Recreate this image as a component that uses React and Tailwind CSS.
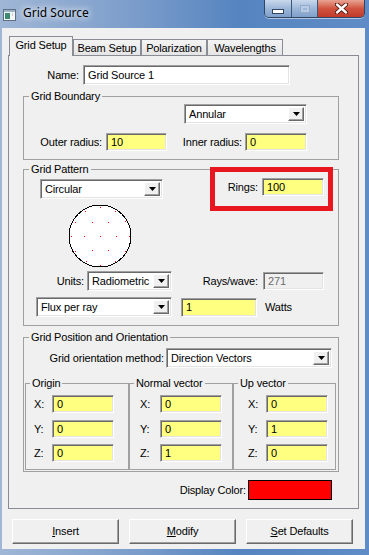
const sunken =
  "border border-t-[#a0a0a0] border-l-[#a0a0a0] border-b-white border-r-white shadow-[inset_1px_1px_0_#696969,inset_-1px_-1px_0_#e3e3e3]"

const raised =
  "border border-t-white border-l-white border-b-[#696969] border-r-[#696969] shadow-[inset_-1px_-1px_0_#a0a0a0] bg-[#f0f0f0]"

const Field = ({ className, value, disabled }) => (
  <div
    className={`${sunken} ${disabled ? "bg-[#f0f0f0] text-[#6d6d6d]" : "bg-[#ffff80]"} flex items-center pl-[4px] shrink-0 ${className}`}
  >
    {value}
  </div>
)

const Select = ({ className, value }) => (
  <div className={`${sunken} bg-white flex items-stretch p-[2px] shrink-0 ${className}`}>
    <div className="flex-1 flex items-center pl-[2px] whitespace-nowrap overflow-hidden">{value}</div>
    <div className={`${raised} w-[16px] flex items-center justify-center`}>
      <svg width="7" height="4" viewBox="0 0 7 4">
        <path d="M0 0h7L3.5 4z" fill="#000" />
      </svg>
    </div>
  </div>
)

const Group = ({ label, className, legendClass = "ml-[5px]", children }) => (
  <fieldset className={`border border-[#a0a0a0] shrink-0 ${className}`}>
    <legend className={`px-[2px] leading-[14px] ${legendClass}`}>{label}</legend>
    {children}
  </fieldset>
)

// ray pattern: center, ring of 6, ring of 12
const dots = (() => {
  const pts = [[32, 32]]
  for (let i = 0; i < 6; i++) {
    const a = (i * Math.PI) / 3
    pts.push([32 + 16 * Math.cos(a), 32 + 16 * Math.sin(a)])
  }
  for (let i = 0; i < 12; i++) {
    const a = (i * Math.PI) / 6
    pts.push([32 + 29 * Math.cos(a), 32 + 29 * Math.sin(a)])
  }
  return pts
})()

const Vec = ({ label, values, pad, labelW, className }) => (
  <Group label={label} legendClass="ml-[4px]" className={`h-[94px] ${className}`}>
    <div className={`flex flex-col ${pad}`}>
      {["X:", "Y:", "Z:"].map((axis, i) => (
        <div
          key={axis}
          className={`flex items-center h-[18px] ${i === 0 ? "mt-[5px]" : i === 1 ? "mt-[7px]" : "mt-[6px]"}`}
        >
          <span className={labelW}>{axis}</span>
          <Field className="w-[62px] h-[18px]" value={values[i]} />
        </div>
      ))}
    </div>
  </Group>
)

const Tab = ({ label, selected, className }) => (
  <div
    className={`${selected
      ? "relative z-10 h-[20px] bg-[#f0f0f0] pb-[2px]"
      : "h-[17px] bg-gradient-to-b from-[#f4f4f4] to-[#e4e4e4]"
      } border border-b-0 border-[#898c95] flex items-center justify-center shrink-0 ${className}`}
  >
    {label}
  </div>
)

const Button = ({ first, rest }) => (
  <div className={`${raised} w-[107px] h-[25px] flex items-center justify-center`}>
    <span>
      <span className="underline">{first}</span>
      {rest}
    </span>
  </div>
)

export default function App() {
  return (
    <div className="relative w-[369px] h-[555px] overflow-hidden bg-[linear-gradient(90deg,#9fb6d6_0%,#7d9ecb_35%,#5584c0_65%,#5f8cc6_100%)] font-['Liberation_Sans',Arial,sans-serif] text-[11px] leading-[13px] tracking-[-0.15px] text-black">
      {/* title bar */}
      <div className="h-[28px] flex items-start">
        <svg className="mt-[9px] ml-[3px]" width="13" height="12" viewBox="0 0 13 12">
          <rect x="0.5" y="0.5" width="12" height="11" fill="#f4f6f8" stroke="#5d6f80" />
          <rect x="1" y="1" width="11" height="2" fill="#9db3c8" />
          <rect x="2" y="4" width="5" height="6" fill="#3d8a74" />
          <rect x="9" y="4" width="1" height="3" fill="#c8c8c8" />
        </svg>
        <div className="ml-[7px] mt-[5px] font-['Noto_Sans',sans-serif] text-[12px] leading-[16px] tracking-normal [text-shadow:0_0_6px_#ffffff,0_0_10px_#ffffff]">
          Grid Source
        </div>
        <div className="ml-auto mr-[4px] flex h-[18px] border border-t-0 border-[#2f4664] rounded-b-[5px] overflow-hidden shadow-[0_1px_0_rgba(255,255,255,0.5)]">
          <div className="w-[27px] bg-gradient-to-b from-[#c9d8ec] via-[#9db7d9] to-[#7f9fca] flex items-center justify-center border-r border-[#3c5677]">
            <div className="mt-[5px] w-[10px] h-[3px] bg-white border border-[#2f4664] box-content" />
          </div>
          <div className="w-[26px] bg-gradient-to-b from-[#c9d8ec] via-[#9db7d9] to-[#7f9fca] flex items-center justify-center border-r border-[#3c5677]">
            <div className="w-[8px] h-[6px] border-2 border-[#b9cbe2] outline outline-1 outline-[#92aacb]" />
          </div>
          <div className="w-[46px] bg-gradient-to-b from-[#e8a393] via-[#d0533f] to-[#c0392b] flex items-center justify-center">
            <svg width="13" height="11" viewBox="0 0 13 11">
              <path d="M2 1.5l9 8M11 1.5l-9 8" stroke="#4a1208" strokeWidth="4.2" strokeLinecap="round" />
              <path d="M2 1.5l9 8M11 1.5l-9 8" stroke="#fff" strokeWidth="2.4" strokeLinecap="round" />
            </svg>
          </div>
        </div>
      </div>

      {/* client area */}
      <div className="ml-[2px] w-[363px] h-[521px] bg-[#f0f0f0] flex flex-col">
        <div className="mt-[8px] ml-[7px] h-[20px] flex items-end">
          <Tab label="Grid Setup" selected className="w-[64px]" />
          <Tab label="Beam Setup" className="w-[68px]" />
          <Tab label="Polarization" className="w-[66px]" />
          <Tab label="Wavelengths" className="w-[76px]" />
        </div>

        <div className="-mt-px ml-[6px] w-[351px] h-[454px] border border-[#898c95] bg-[#f0f0f0] flex flex-col">
          <div className="mt-[9px] flex items-center h-[20px]">
            <span className="w-[70px] text-right">Name:</span>
            <div className={`${sunken} bg-white ml-[4px] w-[207px] h-[20px] flex items-center pl-[4px]`}>
              Grid Source 1
            </div>
          </div>

          <Group label="Grid Boundary" className="mt-[4px] ml-[14px] w-[316px] h-[71px]">
            <Select className="mt-[1px] ml-[160px] w-[123px] h-[20px]" value="Annular" />
            <div className="mt-[9px] flex items-center h-[18px]">
              <span className="w-[78px] text-right">Outer radius:</span>
              <Field className="ml-[4px] w-[61px] h-[18px]" value="10" />
              <span className="w-[75px] text-right">Inner radius:</span>
              <Field className="ml-[3px] w-[62px] h-[18px]" value="0" />
            </div>
          </Group>

          <Group label="Grid Pattern" className="mt-[2px] ml-[14px] w-[316px] h-[164px]">
            <div className="flex items-start">
              <Select className="mt-[3px] ml-[16px] w-[123px] h-[20px]" value="Circular" />
              <span className="mt-[2px] w-[95px] h-[18px] leading-[18px] text-right">Rings:</span>
              <Field className="mt-[2px] ml-[4px] w-[62px] h-[18px]" value="100" />
            </div>
            <svg className="mt-[5px] ml-[44px]" width="64" height="64" viewBox="0 0 64 64" shapeRendering="crispEdges">
              <circle cx="32" cy="32" r="31" fill="#fff" stroke="#000" strokeWidth="1" />
              {dots.map(([x, y], i) => (
                <rect key={i} x={Math.round(x)} y={Math.round(y)} width="1" height="1" fill="#ff0000" />
              ))}
            </svg>
            <div className="mt-[3px] flex items-center h-[20px]">
              <span className="w-[60px] text-right">Units:</span>
              <Select className="ml-[3px] w-[85px] h-[20px]" value="Radiometric" />
              <span className="w-[86px] text-right">Rays/wave:</span>
              <Field className="ml-[5px] w-[61px] h-[18px]" value="271" disabled />
            </div>
            <div className="mt-[6px] flex items-center h-[20px]">
              <Select className="ml-[12px] w-[136px] h-[20px]" value="Flux per ray" />
              <Field className="ml-[9px] w-[76px] h-[19px]" value="1" />
              <span className="ml-[8px]">Watts</span>
            </div>
          </Group>

          <Group label="Grid Position and Orientation" className="mt-[4px] ml-[14px] w-[316px] h-[142px]">
            <div className="mt-[4px] flex items-center h-[20px]">
              <span className="w-[140px] text-right">Grid orientation method:</span>
              <Select className="ml-[2px] w-[166px] h-[20px]" value="Direction Vectors" />
            </div>
            <div className="mt-[8px] ml-[1px] flex">
              <Vec label="Origin" values={["0", "0", "0"]} pad="pl-[8px]" labelW="w-[18px]" className="w-[104px]" />
              <Vec label="Normal vector" values={["0", "0", "1"]} pad="pl-[10px]" labelW="w-[20px]" className="w-[104px]" />
              <Vec label="Up vector" values={["0", "1", "0"]} pad="pl-[14px]" labelW="w-[18px]" className="w-[103px]" />
            </div>
          </Group>

          <div className="mt-[8px] flex items-center h-[20px]">
            <span className="w-[237px] text-right">Display Color:</span>
            <div className="ml-[2px] w-[84px] h-[20px] bg-[#ff0000] border border-black" />
          </div>
        </div>

        <div className="mt-[10px] ml-[10px] flex gap-[10px]">
          <Button first="I" rest="nsert" />
          <Button first="M" rest="odify" />
          <Button first="S" rest="et Defaults" />
        </div>
      </div>

      {/* annotation highlight */}
      <div className="absolute left-[210px] top-[167px] w-[123px] h-[44px] border-[5px] border-[#e8161f] pointer-events-none" />
    </div>
  )
}
